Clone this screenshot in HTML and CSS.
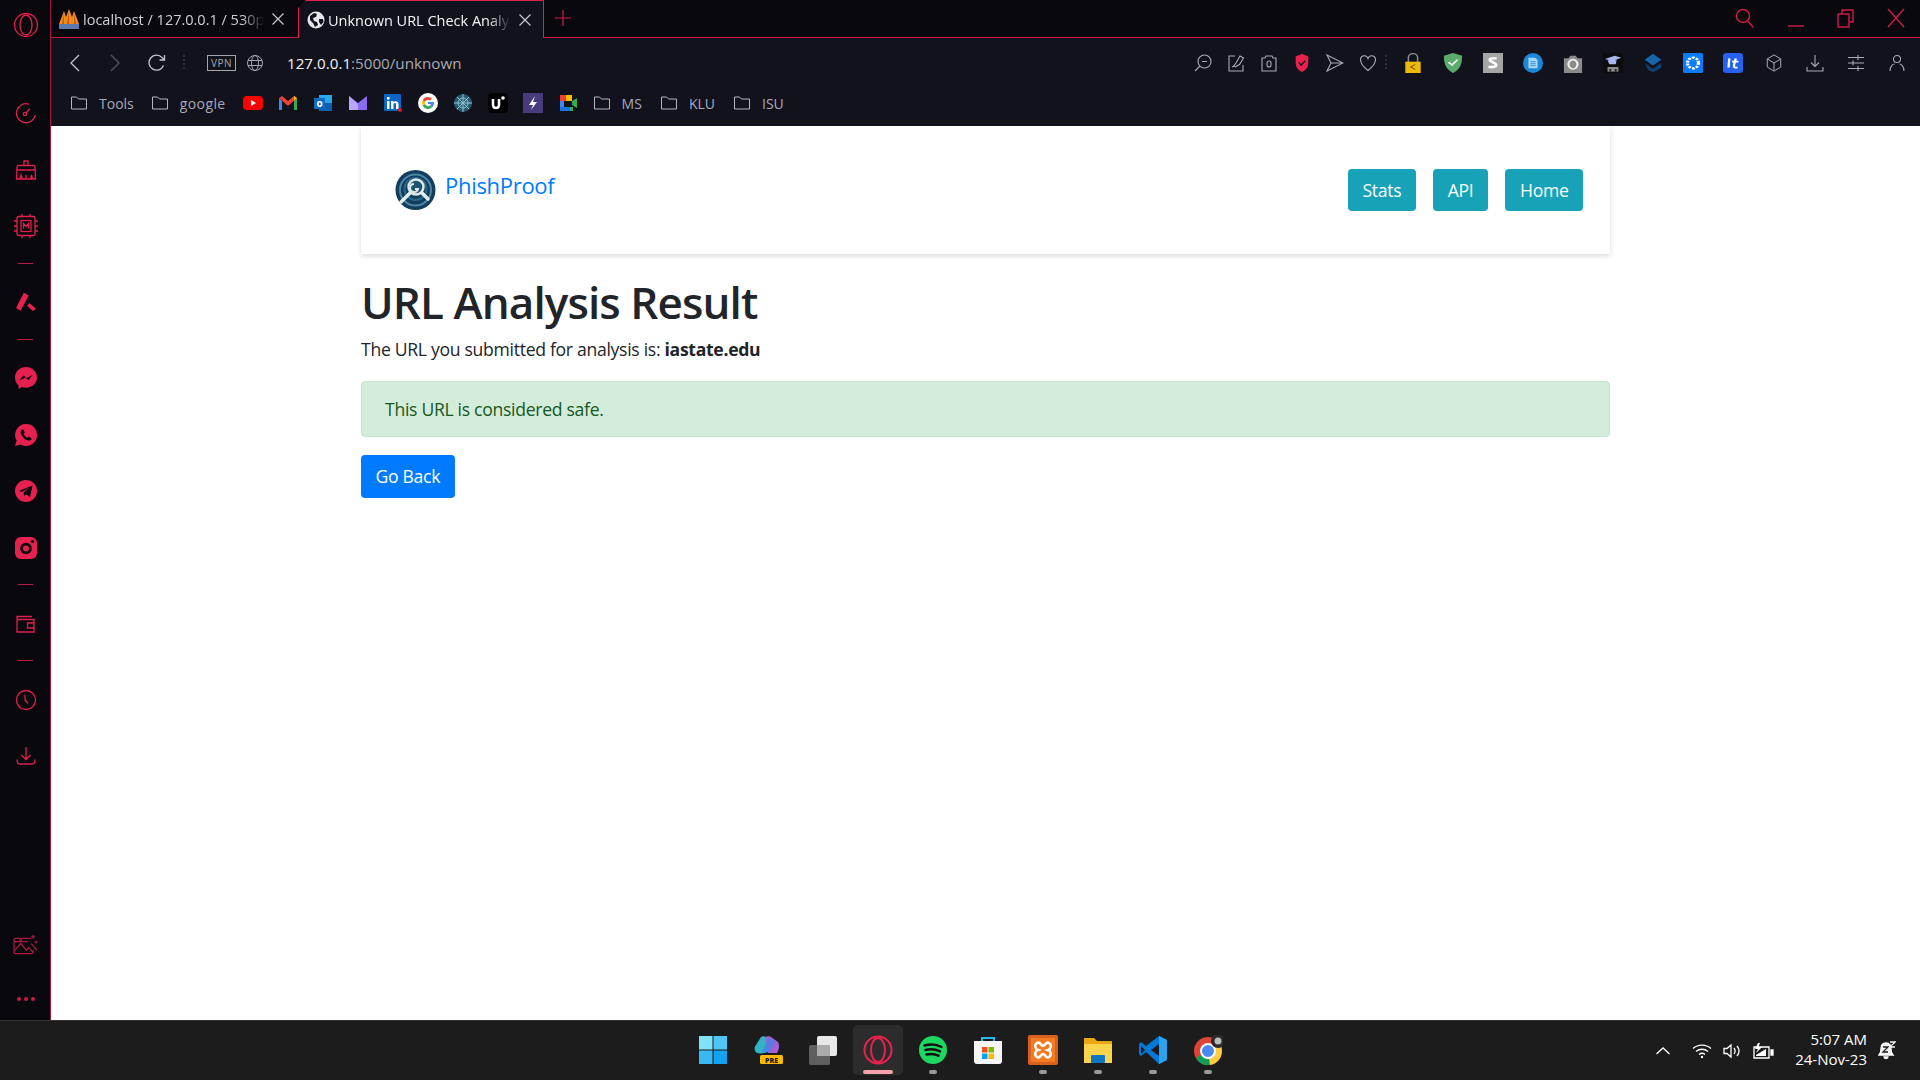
FILE: index.html
```html
<!DOCTYPE html>
<html lang="en">
<head>
    <meta charset="UTF-8">
    <title>Unknown URL Check Analysis</title>
    <link rel="stylesheet" href="styles.css">
</head>
<body>
<div class="desktop">
    <div class="browser">
        <!-- barra lateral -->
        <aside class="sidebar">
            <div class="side-opera">
                <svg width="26" height="26" viewBox="0 0 26 26"><circle cx="13" cy="13" r="11.5"/><ellipse cx="13" cy="13" rx="6" ry="10"/></svg>
            </div>
            <div class="side-item"><svg viewBox="0 0 22 22"><path d="M14 2.2A9.5 9.5 0 1 0 20.3 13"/><path d="M20.3 9.500v.1M19 6.500v.1M17 4v.1"/><circle cx="10" cy="12" r="1.6"/><path d="M11.2 10.8l3.8-4"/></svg></div>
            <div class="side-item"><svg viewBox="0 0 22 22"><path d="M9 6V2h4v4M3 6.500h16c1 0 1 1 1 2L20.500 20H1.500L2 8.500c0-1 0-2 1-2zM2 11h18"/><path d="M5 20l1-4 1.500 4M11 20v-4M15.500 20l1-4 1 4"/></svg></div>
            <div class="side-item chip"><svg viewBox="0 0 26 24"><rect x="4" y="2.500" width="18" height="19" rx="1.500"/><rect x="8" y="6.500" width="10" height="11"/><path d="M4 7H1M4 12H1M4 17H1M22 7h3M22 12h3M22 17h3M9 2.500V0M17 2.500V0M9 24v-2.500M17 24v-2.500"/><path d="M10.500 14.500v-5l2.500 3 2.500-3v5"/></svg></div>
            <div class="side-sep"></div>
            <div class="side-item"><svg viewBox="0 0 20 20"><path class="fill" d="M8 1.500l4.500 2.500-7.500 14-4-2.500zM13 11l6 5-2.500 2.500-5.500-5z"/></svg></div>
            <div class="side-sep"></div>
            <div class="side-item big"><svg viewBox="0 0 24 24"><path class="fill" d="M12 1C5.800 1 1 5.500 1 11.600c0 3.200 1.300 6 3.500 7.900V23l3.300-1.900c1.300.4 2.700.6 4.200.6 6.200 0 11-4.400 11-10.100S18.200 1 12 1z"/><path class="cut" d="M5.500 14.500l4-5 3.200 2.600 5.800-3.100-4 5-3.200-2.600z"/></svg></div>
            <div class="side-item big"><svg viewBox="0 0 24 24"><path class="fill" d="M12 1a11 11 0 0 0-9.300 16.800L1 23l5.400-1.600A11 11 0 1 0 12 1z"/><path class="cut" d="M8 6.500c-1.500 1-1.800 3-.5 5.500 1.400 2.600 3.800 4.800 6.500 5.500 1.900.4 3.300-.5 3.700-2.100l-2.900-1.900-1.400 1.200c-1.500-.6-3-2.200-3.800-3.800l1.200-1.300-1.300-3z"/></svg></div>
            <div class="side-item big"><svg viewBox="0 0 24 24"><circle class="fill" cx="12" cy="12" r="11"/><path class="cut" d="M5 12L18.500 6.500 16 18l-4-2.800-2 2-.4-3.800 5.900-5-7.500 4.400z"/></svg></div>
            <div class="side-item big"><svg viewBox="0 0 24 24"><rect class="fill" x="1" y="1" width="22" height="22" rx="6"/><circle class="cut" cx="12" cy="12.500" r="5.800"/><circle class="fill" cx="12" cy="12.500" r="3"/><circle class="cut" cx="18.500" cy="5.500" r="1.600"/></svg></div>
            <div class="side-sep"></div>
            <div class="side-item"><svg viewBox="0 0 22 20"><path d="M2 18V2.500h15M2 5.500h17V18H2zM19 9h-6.500v5H19"/><path d="M15 11.500h.1"/></svg></div>
            <div class="side-sep"></div>
            <div class="side-item"><svg viewBox="0 0 22 22"><circle cx="11" cy="11" r="9.500"/><path d="M10 5.500v5.500l3 3.500"/></svg></div>
            <div class="side-item"><svg viewBox="0 0 22 20"><path d="M11 1v12M6.500 9l4.500 4.500L15.500 9M2 13.500c0 4 1 4.500 4 4.500h10c3 0 4-.5 4-4.500"/></svg></div>
            <div class="side-bottom">
                <svg class="side-gallery" viewBox="0 0 26 22"><path d="M19 4.500H2.500c-1 0-1.500.5-1.500 1.500v13c0 1 .5 1.500 1.500 1.500h17c1 0 1.500-.5 1.500-1.500v-2"/><path d="M1 18l7-8 6 7 2.500-3 4 5M1 8h14"/><circle cx="8" cy="7" r="1"/><path d="M19 10l6 7M21 1v4M19 3h4M24 7v3M22.500 8.500h3"/></svg>
                <div class="side-dots"><span></span><span></span><span></span></div>
            </div>
        </aside>

        <div class="window">
            <!-- abas -->
            <div class="tabs">
                <div class="tab">
                    <svg class="favicon" width="22" height="22" viewBox="0 0 22 22"><path d="M1 16L6 3l2 6 3-8 3 8 2-6 5 13z" fill="#f08a1c"/><path d="M6 5l-2 11h2zM11 3L9 16h2zM16 5l2 11h-2z" fill="#c85a10"/><rect x="1" y="16" width="20" height="5" fill="#5d7ab0"/></svg>
                    <span class="tab-title">localhost / 127.0.0.1 / 530p</span>
                    <svg class="tab-close" width="12" height="12" viewBox="0 0 12 12"><path d="M.5.500l11 11M11.500.500l-11 11"/></svg>
                </div>
                <div class="tab active">
                    <svg class="favicon" width="18" height="18" viewBox="0 0 18 18"><circle cx="9" cy="9" r="8.500" fill="#e8e8ea"/><path d="M3 5l4-3 3 1-1 3-3 1 1 3 3 1 1 3-3 2-2-4-3-3zM12 8h4l.5 3-2.500 3-2-3z" fill="#12121c"/></svg>
                    <span class="tab-title">Unknown URL Check Analy</span>
                    <svg class="tab-close" width="12" height="12" viewBox="0 0 12 12"><path d="M.5.500l11 11M11.500.500l-11 11"/></svg>
                </div>
                <svg class="tab-new" width="16" height="16" viewBox="0 0 16 16"><path d="M8 0v16M0 8h16"/></svg>
                <div class="win-controls">
                    <svg width="20" height="20" viewBox="0 0 20 20"><circle cx="8" cy="8" r="6.500"/><path d="M12.500 13l6 6.500"/></svg>
                    <svg width="18" height="20" viewBox="0 0 18 20"><path d="M1 18h16"/></svg>
                    <svg width="18" height="20" viewBox="0 0 18 20"><rect x="1" y="6" width="11" height="13"/><path d="M5 6V2h11v12h-4"/></svg>
                    <svg width="18" height="20" viewBox="0 0 18 20"><path d="M1 1l16 18M17 1L1 19"/></svg>
                </div>
            </div>

            <!-- barra de endereco -->
            <div class="toolbar">
                <div class="nav-btn"><svg width="11" height="18" viewBox="0 0 11 18"><path d="M10 1L2 9l8 8"/></svg></div>
                <div class="nav-btn off"><svg width="11" height="18" viewBox="0 0 11 18"><path d="M1 1l8 8-8 8"/></svg></div>
                <div class="nav-btn"><svg width="18" height="18" viewBox="0 0 18 18"><path d="M15.500 11.500A7.500 7.500 0 1 1 14 3.500L16.500 6M16.500 1v5h-5"/></svg></div>
                <div class="tool-sep"></div>
                <span class="vpn">VPN</span>
                <svg class="globe" width="16" height="16" viewBox="0 0 16 16"><circle cx="8" cy="8" r="7.500"/><ellipse cx="8" cy="8" rx="3.500" ry="7.500"/><path d="M1 5.500h14M1 10.500h14"/></svg>
                <div class="url"><b>127.0.0.1</b>:5000/unknown</div>

                <div class="tools">
                    <div class="tool"><svg viewBox="0 0 18 18"><circle cx="10.500" cy="7.500" r="6.500"/><path d="M6 12l-5 5M8 7.500h5"/></svg></div>
                    <div class="tool"><svg viewBox="0 0 18 18"><path d="M8 2H2v15h14v-6"/><path d="M6 13l3-4 4-7 3.500 2-4 6.500-4.500 2.500M5 13l3-1"/></svg></div>
                    <div class="tool"><svg viewBox="0 0 18 18"><path d="M2 4h3l1-2h6l1 2h3v13H2z"/><rect x="7" y="7" width="4" height="6" rx="2"/></svg></div>
                    <div class="tool"><svg viewBox="0 0 18 20"><path d="M9 0l7 2.500V10c0 5-3 8-7 10-4-2-7-5-7-10V2.500z" fill="#e8214f" stroke="none"/><path d="M5.500 9.500l2.500 3 4.500-5" stroke="#12121c" stroke-width="1.500"/></svg></div>
                    <div class="tool"><svg viewBox="0 0 18 18"><path d="M1 1l16 8-16 8 4-8zM5 9h12"/></svg></div>
                    <div class="tool"><svg viewBox="0 0 18 18"><path d="M9 16.500C4 12.500 1.500 9.500 1.500 6c0-5 6-5.500 7.500-1.500C10.500.5 16.500 1 16.500 6c0 3.500-2.500 6.500-7.500 10.500z"/></svg></div>
                    <div class="tool-sep narrow"></div>
                    <div class="ext"><svg viewBox="-2 0 26 30" preserveAspectRatio="none"><path d="M5 14V7a6 6 0 0 1 12 0v7" fill="none" stroke="#8d8d8d" stroke-width="2"/><rect x="1" y="13" width="20" height="17" fill="#efb90a"/><path d="M14 17l-6 4 6 4" fill="none" stroke="#7a5b00" stroke-width="1.500"/></svg></div>
                    <div class="ext"><svg viewBox="0 0 22 30" preserveAspectRatio="none"><path d="M11 0l10 4c0 12-2 20-10 26C3 24 1 16 1 4z" fill="#5bab6c"/><path d="M6 14l4 4 6-8" fill="none" stroke="#fff" stroke-width="2"/></svg></div>
                    <div class="ext"><svg viewBox="0 0 22 30" preserveAspectRatio="none"><rect width="22" height="30" fill="#a5a5a5"/><path d="M15 8h-5c-3 0-3 4 0 5l2 2c3 1 3 5 0 6H6" fill="none" stroke="#fff" stroke-width="3.500"/></svg></div>
                    <div class="ext"><svg viewBox="0 0 22 30" preserveAspectRatio="none"><ellipse cx="11" cy="15" rx="11" ry="15" fill="#1a87d8"/><path d="M6 7h7l3 3v13H6z" fill="#a8d6f7"/><path d="M8 13h6M8 16h6M8 19h6" stroke="#1a87d8"/></svg></div>
                    <div class="ext"><svg viewBox="0 0 22 30" preserveAspectRatio="none"><path d="M1 8h5l2-4h6l2 4h5v22H1z" fill="#8a8a8a"/><ellipse cx="11" cy="17" rx="5" ry="7" fill="#8a8a8a" stroke="#eee" stroke-width="2.500"/></svg></div>
                    <div class="ext"><svg viewBox="0 0 22 30" preserveAspectRatio="none"><rect width="22" height="30" fill="#0c0c0c"/><path d="M2 9l11-5 7 3-9 5z M5 11h10l-1 6H7z" fill="#a9b8ee"/><path d="M5 28V21h12v7z" fill="#8b8b8b"/><path d="M8 28v-4M14 28v-4" stroke="#222" stroke-width="2"/></svg></div>
                    <div class="ext"><svg viewBox="0 0 22 24"><path d="M11 1l10 7-10 7L1 8z" fill="#1565a8"/><path d="M1 10v8M1 12l10 7 10-7v6l-10 5-6-3" fill="#0e3f6e"/></svg></div>
                    <div class="ext"><svg viewBox="0 0 22 30" preserveAspectRatio="none"><rect width="22" height="30" rx="2" fill="#0a7cff"/><ellipse cx="11" cy="15" rx="6" ry="8" fill="none" stroke="#fff" stroke-width="3.500" stroke-dasharray="3 1.500"/></svg></div>
                    <div class="ext"><svg viewBox="0 0 22 30" preserveAspectRatio="none"><rect width="22" height="30" rx="4" fill="#2662f0"/><path d="M7 8l-1 14M14 8l-2 11c0 3 1 3 4 3M10 13h7" fill="none" stroke="#fff" stroke-width="2.500"/></svg></div>
                    <div class="tool wide"><svg viewBox="0 0 18 20"><path d="M9 1l7.500 4.500v9L9 19l-7.500-4.500v-9zM1.500 5.500L9 10l7.500-4.500M9 10v9"/></svg></div>
                    <div class="tool wide"><svg viewBox="0 0 18 18"><path d="M9 1v11M5 8.500l4 4 4-4M1 13v4h16v-4"/></svg></div>
                    <div class="tool wide"><svg viewBox="0 0 18 18"><path d="M1 3.500h16M1 9h16M1 14.500h16M11 1v5M6 6.500v5M11 12v5"/></svg></div>
                    <div class="tool wide"><svg viewBox="0 0 18 18"><circle cx="9" cy="5" r="3.500"/><path d="M2 17c0-5 3-7 4.500-7M16 17c0-5-3-7-4.500-7"/></svg></div>
                </div>
            </div>

            <!-- favoritos -->
            <div class="bookmarks">
                <div class="bm-folder"><svg class="folder" width="16" height="14" viewBox="0 0 16 14"><path d="M.5 13V1h5l2 2h8v10z"/></svg><span>Tools</span></div>
                <div class="bm-folder"><svg class="folder" width="16" height="14" viewBox="0 0 16 14"><path d="M.5 13V1h5l2 2h8v10z"/></svg><span class="bm-wide">google</span></div>
                <div class="bm-icons">
                    <svg viewBox="0 0 20 20"><rect y="3" width="20" height="14" rx="4" fill="#f00"/><path d="M8 7l5 3-5 3z" fill="#fff"/></svg>
                    <svg viewBox="0 0 20 20"><path d="M1 5v12h3V8z" fill="#4285f4"/><path d="M19 5v12h-3V8z" fill="#34a853"/><path d="M1 5l3-2 6 5 6-5 3 2-9 8z" fill="#ea4335"/><path d="M16 3l3 2-3 3z" fill="#fbbc04"/></svg>
                    <svg viewBox="0 0 20 20"><rect x="6" y="2" width="13" height="16" fill="#28a8ea"/><path d="M6 10l13 0v8H6z" fill="#0a5fb0"/><rect x="1" y="5" width="11" height="11" fill="#0f6cbd"/><text x="6.500" y="14" class="bm-letter">o</text></svg>
                    <svg viewBox="0 0 20 20"><path d="M1 3l9 7 9-7v14H1z" fill="#8a6cf2"/><path d="M1 3l9 8v6H1z" fill="#b9a5ff"/></svg>
                    <svg viewBox="0 0 20 20"><rect x="1" y="1" width="17" height="17" rx="1" fill="#0a66c2"/><path d="M4 8h2.500v8H4zM4 4h2.500v2.500H4zM8 8h2.500v1.500c1-2 5-2 5 1.500v5H13v-4.500c0-2-2.500-2-2.500 0V16H8z" fill="#fff"/><circle cx="17" cy="17" r="2" fill="#d01a32"/></svg>
                    <svg viewBox="0 0 20 20"><circle cx="10" cy="10" r="10" fill="#fff"/><path d="M10 4a6 6 0 0 1 4 1.500l-2 2A3.200 3.200 0 0 0 7 9L4.700 7.200A6 6 0 0 1 10 4z" fill="#ea4335"/><path d="M4.700 7.200L7 9a3.200 3.200 0 0 0 0 2l-2.300 1.800a6 6 0 0 1 0-5.600z" fill="#fbbc04"/><path d="M4.700 12.800L7 11a3.200 3.200 0 0 0 5 1.500l2.200 1.700A6 6 0 0 1 4.700 12.800z" fill="#34a853"/><path d="M16 10c0 1.700-.7 3.200-1.800 4.200L12 12.500c.6-.5 1-1 1.100-1.500H10V9h5.800z" fill="#4285f4"/></svg>
                    <svg viewBox="0 0 20 20"><circle cx="10" cy="10" r="9" fill="#2a5a70"/><path d="M10 1v18M1 10h18M4 4l12 12M16 4L4 16" stroke="#8fc4d6"/><circle cx="10" cy="10" r="5" fill="none" stroke="#8fc4d6"/></svg>
                    <svg viewBox="0 0 20 20"><rect width="20" height="20" rx="4" fill="#000"/><path d="M5 6v6c0 4 6 4 6 0V6" fill="none" stroke="#fff" stroke-width="2.500"/><circle cx="15" cy="5" r="1.800" fill="#fff"/></svg>
                    <svg viewBox="0 0 20 20"><rect width="20" height="20" fill="#4b3a7c"/><path d="M12 3l-6 9h4l-2 5 6-8h-4z" fill="#fff"/></svg>
                    <svg viewBox="0 0 20 20"><path d="M2 2h6v6H2z" fill="#ea4335"/><path d="M8 2h6v6H8z" fill="#fbbc04"/><path d="M2 8h4v6H2z" fill="#4285f4"/><path d="M2 14h12v4H2z" fill="#1a73e8"/><path d="M14 8v6H6V8z" fill="#111"/><path d="M14 8l5-3v10l-5-3zM12 14h3v4h-3z" fill="#34a853"/></svg>
                </div>
                <div class="bm-folder short"><svg class="folder" width="16" height="14" viewBox="0 0 16 14"><path d="M.5 13V1h5l2 2h8v10z"/></svg><span>MS</span></div>
                <div class="bm-folder short"><svg class="folder" width="16" height="14" viewBox="0 0 16 14"><path d="M.5 13V1h5l2 2h8v10z"/></svg><span>KLU</span></div>
                <div class="bm-folder short"><svg class="folder" width="16" height="14" viewBox="0 0 16 14"><path d="M.5 13V1h5l2 2h8v10z"/></svg><span>ISU</span></div>
            </div>

            <!-- pagina -->
            <main class="page">
                <div class="container">
                    <header class="site-nav">
                        <a class="brand">
                            <svg width="41" height="40" viewBox="0 0 41 40">
                                <circle cx="20.500" cy="20" r="20" fill="#113e5c"/>
                                <circle cx="20.500" cy="20" r="15.500" fill="none" stroke="#4d86a3" stroke-width="2"/>
                                <circle cx="20.500" cy="19" r="11" fill="none" stroke="#2a6685" stroke-width="2"/>
                                <circle cx="21" cy="17" r="7.500" fill="#1d5472" stroke="#dce7e8" stroke-width="2.500"/>
                                <path d="M19 14a4 4 0 1 0 4 5h-3" fill="none" stroke="#dce7e8" stroke-width="2"/>
                                <path d="M15 23l-9 9M27 23l6 6" stroke="#e4ece9" stroke-width="3.500" stroke-linecap="round"/>
                            </svg>
                            <span>PhishProof</span>
                        </a>
                        <nav class="nav-links">
                            <a class="btn btn-info">Stats</a>
                            <a class="btn btn-info">API</a>
                            <a class="btn btn-info">Home</a>
                        </nav>
                    </header>

                    <h1>URL Analysis Result</h1>
                    <p>The URL you submitted for analysis is: <strong>iastate.edu</strong></p>
                    <div class="alert">This URL is considered safe.</div>
                    <a class="btn btn-primary">Go Back</a>
                </div>
            </main>
        </div>
    </div>

    <!-- barra de tarefas -->
    <footer class="taskbar">
        <div class="task-apps">
            <div class="task-app"><svg viewBox="0 0 30 30"><path d="M1 1h13.500v13.500H1z" fill="#7fe3fb"/><path d="M15.500 1H29v13.500H15.500z" fill="#4fc6f5"/><path d="M1 15.500h13.500V29H1z" fill="#39b9f2"/><path d="M15.500 15.500H29V29H15.500z" fill="#14a2f0"/></svg></div>
            <div class="task-app"><svg viewBox="0 0 30 30"><path d="M8 2c3-2 6 0 6 2l3 12c-3 2-9 3-13 2C1 16 1 12 3 10z" fill="#2fb4c8"/><path d="M12 2c2-1 5-1 6 0l7 5c2 3 1 8-1 11H15z" fill="#a45fd6"/><path d="M15 4c3-1 6 0 7 3l-5 10H9z" fill="#4e7fe6" opacity=".8"/><rect x="7" y="20" width="23" height="9" rx="1.500" fill="#ffb900"/><text x="18.500" y="27.500" class="pre">PRE</text></svg></div>
            <div class="task-app"><svg viewBox="0 0 30 30"><rect x="9" y="1" width="20" height="20" rx="2" fill="#e8e8e8"/><rect x="1" y="10" width="21" height="20" rx="2" fill="#5f5f5f"/><rect x="9" y="10" width="13" height="11" fill="#aaa"/></svg></div>
            <div class="task-app current">
                <svg viewBox="0 0 30 30"><circle cx="15" cy="15" r="13.500" fill="none" stroke="#e8214f" stroke-width="2"/><ellipse cx="15" cy="15" rx="7" ry="12" fill="none" stroke="#e8214f" stroke-width="2"/></svg>
                <i class="task-bar"></i>
            </div>
            <div class="task-app open">
                <svg viewBox="0 0 30 30"><circle cx="15" cy="15" r="14" fill="#1ed760"/><path d="M6.500 10.500c6-1.800 12-1.300 17 1.500M7.500 15c5-1.300 10-.9 14.500 1.400M8.500 19.500c4-1 8.500-.7 12 1.200" fill="none" stroke="#111" stroke-width="2.500" stroke-linecap="round"/></svg>
                <i class="task-dot"></i>
            </div>
            <div class="task-app"><svg viewBox="0 0 30 30"><path d="M9 7V3h12v4" fill="none" stroke="#2cb6f0" stroke-width="2"/><path d="M1 6h28v20c0 2-1 3-3 3H4c-2 0-3-1-3-3z" fill="#f6f6f6"/><rect x="9" y="12" width="5.500" height="5.500" fill="#f25022"/><rect x="15.500" y="12" width="5.500" height="5.500" fill="#7fba00"/><rect x="9" y="18.500" width="5.500" height="5.500" fill="#00a4ef"/><rect x="15.500" y="18.500" width="5.500" height="5.500" fill="#ffb900"/></svg></div>
            <div class="task-app open">
                <svg viewBox="0 0 30 30"><rect width="30" height="30" rx="2" fill="#d9611d"/><rect x="3" y="3" width="24" height="24" fill="#f37b22"/><path d="M9 8c3-2 4 3 6 3s3-5 6-3 2 6-1 7c3 1 4 5 1 7s-4-3-6-3-3 5-6 3-2-6 1-7c-3-1-4-5-1-7z" fill="none" stroke="#fff" stroke-width="2.500"/></svg>
                <i class="task-dot"></i>
            </div>
            <div class="task-app open">
                <svg viewBox="0 0 30 30"><path d="M1 3h10l3 3h15v22H1z" fill="#e8a80e"/><path d="M1 9h28v19H1z" fill="#fcd34d"/><rect x="8" y="20" width="14" height="8" rx="1" fill="#0f76c4"/></svg>
                <i class="task-dot"></i>
            </div>
            <div class="task-app open">
                <svg viewBox="0 0 30 30"><path d="M21 1l8 4v20l-8 4-13-12-5 4-2-2v-10l2-2 5 4z" fill="#0078d4"/><path d="M21 1l8 4v20l-8 4z" fill="#2aa0ee"/><path d="M21 9v12l-8-6z" fill="#1c1c1c"/><path d="M3 11l4 4-4 4z" fill="#1c1c1c"/></svg>
                <i class="task-dot"></i>
            </div>
            <div class="task-app open">
                <svg viewBox="0 0 30 30"><circle cx="15" cy="16" r="14" fill="#db4437"/><path d="M15 16L3 23A14 14 0 0 0 17 30z" fill="#0f9d58"/><path d="M15 16l12-7a14 14 0 0 1-10 21z" fill="#ffcd40"/><circle cx="15" cy="16" r="7" fill="#4a8af4" stroke="#fff" stroke-width="2"/><circle cx="25" cy="6" r="7" fill="#2a2a2a"/><circle cx="25" cy="6" r="3.500" fill="#bbb"/></svg>
                <i class="task-dot"></i>
            </div>
        </div>
        <div class="tray">
            <svg class="tray-chevron" width="16" height="10" viewBox="0 0 16 10"><path d="M1.500 8L8 2l6.500 6"/></svg>
            <svg class="tray-wifi" width="20" height="16" viewBox="0 0 20 16"><path d="M1 5.500c5-4.500 13-4.500 18 0M4 8.500c3.500-3 8.500-3 12 0M7 11.500c1.800-1.500 4.200-1.500 6 0"/><circle cx="10" cy="14" r="1.200" fill="#fff" stroke="none"/></svg>
            <svg class="tray-sound" width="20" height="16" viewBox="0 0 20 16"><path d="M1 5.500h3L8 2v12l-4-3.500H1zM11 5c1.500 2 1.500 4 0 6M14 3c2.500 3 2.500 7 0 10"/></svg>
            <svg class="tray-battery" width="21" height="16" viewBox="0 0 21 16"><path d="M1 4h15v11H1z"/><path d="M18 7h2v5h-2z" fill="#fff"/><path d="M5 0L2 6h3l-2 4 6-6H5.500L7 0z" fill="#fff" stroke="none"/><path d="M3 12l10-6v7H3z" fill="#fff" stroke="none"/></svg>
            <div class="clock"><span>5:07 AM</span><span>24-Nov-23</span></div>
            <svg class="tray-bell" width="18" height="20" viewBox="0 0 18 20"><path d="M8 2c-4 0-5 3-5 6 0 3-1 5-2 6h14c-1-1-2-3-2-6 0-3-1-6-5-6z" fill="#f2f2f2"/><path d="M6 16h4c0 2-4 2-4 0z" fill="#f2f2f2"/><path d="M5 6h5l-5 5h5" fill="none" stroke="#1c1c1c" stroke-width="1.300"/><path d="M12 1h5l-5 5h5" fill="none" stroke="#f2f2f2" stroke-width="1.300"/></svg>
        </div>
    </footer>
</div>
</body>
</html>
```

FILE: styles.css
```css
/* Estilos gerais */
* {
    box-sizing: border-box;
}

html, body {
    margin: 0;
    height: 100%;
    overflow: hidden;
}

body {
    font-family: "Open Sans", "Noto Sans", sans-serif;
    color: #212529;
    background-color: #fff;
}

svg {
    display: block;
    flex: none;
}

.desktop {
    height: 1080px;
    display: flex;
    flex-direction: column;
}

.browser {
    flex: 1;
    min-height: 0;
    display: flex;
    background-color: #08080e;
}

/* Barra lateral */
.sidebar {
    width: 51px;
    flex: none;
    border-right: 1px solid #a5163c;
    display: flex;
    flex-direction: column;
    align-items: center;
    gap: 16.5px;
    padding: 12px 0 0 1px;
}

.sidebar svg {
    fill: none;
    stroke: #e0204f;
    stroke-width: 1.3;
}

.sidebar .fill {
    fill: #e6204f;
    stroke: none;
}

.sidebar .cut {
    fill: #08080e;
    stroke: none;
}

.side-opera {
    height: 26px;
    margin-bottom: 38.5px;
}

.side-item {
    height: 40px;
    width: 100%;
    display: flex;
    align-items: center;
    justify-content: center;
}

.side-item svg {
    width: 22px;
    height: 22px;
}

.side-item.chip svg {
    width: 26px;
    height: 24px;
}

.side-item.big svg {
    width: 24px;
    height: 24px;
}

.side-sep {
    width: 15px;
    height: 1px;
    background-color: #e0204f;
    opacity: 0.8;
    margin-bottom: 2px;
}

.side-bottom {
    margin-top: auto;
    display: flex;
    flex-direction: column;
    align-items: center;
    gap: 42px;
    padding-bottom: 19px;
}

.side-gallery {
    width: 25px;
    height: 21px;
    opacity: 0.75;
}

.side-dots {
    display: flex;
    gap: 3px;
}

.side-dots span {
    width: 4px;
    height: 4px;
    border-radius: 50%;
    background-color: #c81c47;
}

/* Janela */
.window {
    flex: 1;
    min-width: 0;
    display: flex;
    flex-direction: column;
}

.tabs {
    height: 38px;
    flex: none;
    display: flex;
    align-items: stretch;
    padding-left: 4px;
    border-bottom: 1px solid #c01a44;
}

.tab {
    display: flex;
    align-items: center;
    width: 243px;
    padding: 1px 0 0 3px;
    font-size: 14.5px;
    color: #cfcfd6;
}

.tab.active {
    width: 246px;
    height: 38px;
    padding-left: 8px;
    color: #f4f4f6;
    background-color: #12121c;
    border: 1px solid #e0204f;
    border-bottom: none;
    clip-path: polygon(8px 0, 100% 0, 100% 100%, 0 100%, 0 8px);
}

.tab-title {
    flex: 1;
    min-width: 0;
    margin-left: 3px;
    white-space: nowrap;
    -webkit-mask-image: linear-gradient(to left, transparent 0, #000 22px);
    mask-image: linear-gradient(to left, transparent 0, #000 22px);
}

.tab-close {
    margin: 0 14px 0 8px;
    fill: none;
    stroke: #c8c8ce;
    stroke-width: 1.2;
}

.tab.active .tab-close {
    margin-right: 12px;
}

.tab-new {
    margin: 10px 0 0 11px;
    fill: none;
    stroke: #d01c49;
    stroke-width: 1.2;
}

.win-controls {
    margin-left: auto;
    display: flex;
    gap: 32px;
    padding: 8px 15px 0 0;
}

.win-controls svg {
    fill: none;
    stroke: #d01c49;
    stroke-width: 1.4;
}

.toolbar {
    height: 50px;
    flex: none;
    display: flex;
    align-items: center;
    padding-left: 3px;
    background-color: #12121c;
}

.nav-btn {
    width: 41px;
    display: flex;
    justify-content: center;
}

.nav-btn svg {
    fill: none;
    stroke: #c4c4cc;
    stroke-width: 1.3;
}

.nav-btn.off svg {
    stroke: #55555f;
}

.tool-sep {
    width: 2px;
    height: 16px;
    margin: 0 22px 0 6px;
    background-image: linear-gradient(#2d2d38 50%, transparent 50%);
    background-size: 2px 4px;
}

.vpn {
    width: 29px;
    height: 16px;
    border: 1px solid #a5a5ae;
    font-size: 10px;
    line-height: 14px;
    letter-spacing: 0.5px;
    text-align: center;
    color: #a5a5ae;
}

.globe {
    margin-left: 11px;
    fill: none;
    stroke: #a5a5ae;
}

.url {
    margin-left: 24px;
    font-size: 15.2px;
    color: #a9a9b2;
}

.url b {
    font-weight: 400;
    color: #f2f2f4;
}

.tools {
    margin-left: auto;
    display: flex;
    align-items: center;
    padding-right: 3px;
}

.tool {
    width: 33px;
    display: flex;
    justify-content: center;
}

.tool.wide {
    width: 41px;
}

.tool svg {
    width: 18px;
    height: 18px;
    fill: none;
    stroke: #aaaab3;
    stroke-width: 1.1;
}

.tool-sep.narrow {
    margin: 0 6px 0 1px;
}

.ext {
    width: 40px;
    display: flex;
    justify-content: center;
}

.ext svg {
    height: 20px;
    width: 20px;
}

.bookmarks {
    height: 38px;
    flex: none;
    display: flex;
    align-items: center;
    padding: 0 0 8px 20px;
    background-color: #12121c;
    font-size: 14px;
    color: #a9a9bb;
}

.bm-folder {
    display: flex;
    align-items: center;
    gap: 12px;
    margin-right: 18px;
}

.bm-wide {
    letter-spacing: 0.4px;
}

.bm-folder.short {
    margin-right: 19px;
}

.folder {
    fill: none;
    stroke: #b5b5bd;
}

.bm-icons {
    display: flex;
    gap: 15px;
    margin: 0 16px 0 -1px;
}

.bm-icons svg {
    width: 20px;
    height: 20px;
}

.bm-letter {
    font-family: "Open Sans", sans-serif;
    font-size: 10px;
    font-weight: 700;
    text-anchor: middle;
    fill: #fff;
}

/* Pagina */
.page {
    flex: 1;
    min-height: 0;
    background-color: #fff;
    font-size: 17.6px;
    line-height: 1.5;
    letter-spacing: -0.3px;
}

.container {
    width: 1249px;
    margin: 0 auto;
}

.site-nav {
    height: 128px;
    display: flex;
    align-items: center;
    justify-content: space-between;
    padding: 0 27px 0 34px;
    box-shadow: 0 2px 5px rgba(0, 0, 0, 0.15);
}

.brand {
    display: flex;
    align-items: center;
    gap: 9px;
    font-size: 22px;
    color: #007bff;
}

.brand span {
    margin-bottom: 10px;
}

.nav-links {
    display: flex;
    gap: 17.5px;
}

.btn {
    display: inline-block;
    padding: 8px 14.5px;
    border-radius: 4px;
    color: #fff;
}

.btn-info {
    background-color: #17a2b8;
}

.btn-primary {
    background-color: #007bff;
}

h1 {
    margin: 22px 0 7px;
    font-size: 44px;
    font-weight: 600;
    line-height: 1.2;
    letter-spacing: -0.9px;
}

p {
    margin: 0 0 19px;
}

strong {
    font-weight: 700;
}

.alert {
    height: 56px;
    margin-bottom: 18px;
    padding: 0 23px;
    display: flex;
    align-items: center;
    color: #155724;
    background-color: #d4edda;
    border: 1px solid #c3e6cb;
    border-radius: 4px;
}

/* Barra de tarefas */
.taskbar {
    height: 60px;
    flex: none;
    position: relative;
    display: flex;
    justify-content: center;
    background-color: #1c1c1c;
    border-top: 1px solid #333;
}

.task-apps {
    display: flex;
    margin-left: 1px;
}

.task-app {
    width: 55px;
    height: 59px;
    position: relative;
    display: flex;
    justify-content: center;
    padding-top: 14px;
}

.task-app svg {
    width: 30px;
    height: 30px;
}

.task-app.current {
    width: 50px;
    height: 50px;
    margin: 4px 2.5px 0;
    padding-top: 10px;
    background-color: #2c2c2c;
    border-radius: 5px;
}

.task-bar {
    position: absolute;
    bottom: 1px;
    left: 10px;
    width: 30px;
    height: 4px;
    border-radius: 2px;
    background-color: #f4a0ad;
}

.task-dot {
    position: absolute;
    bottom: 6px;
    left: 23px;
    width: 8px;
    height: 4px;
    border-radius: 2px;
    background-color: #9a9a9a;
}

.pre {
    font-family: "Open Sans", sans-serif;
    font-size: 7px;
    font-weight: 800;
    text-anchor: middle;
    fill: #1c1c1c;
}

.tray {
    position: absolute;
    right: 24px;
    top: 0;
    height: 59px;
    display: flex;
    align-items: center;
    color: #fff;
}

.tray svg {
    fill: none;
    stroke: #fff;
    stroke-width: 1.3;
}

.tray-wifi {
    margin-left: 21px;
}

.tray-sound {
    margin-left: 11px;
}

.tray-chevron {
    stroke-width: 1.8;
}

.tray-battery {
    margin-left: 10px;
}

.clock {
    width: 93px;
    display: flex;
    flex-direction: column;
    align-items: flex-end;
    font-size: 15px;
    line-height: 20px;
    margin-top: -4px;
}

.tray-bell {
    margin-left: 11px;
}
```
